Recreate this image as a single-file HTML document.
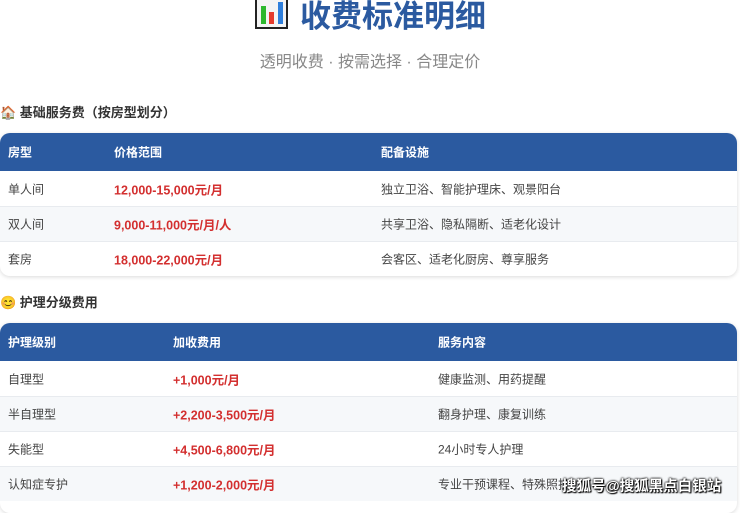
<!DOCTYPE html>
<html><head><meta charset="utf-8"><style>
body{margin:0;width:740px;height:499px;overflow:hidden;background:#fff;font-family:"Liberation Sans","Noto Sans CJK SC",sans-serif;position:relative}
.t{position:absolute;left:300px;top:-9px;font-size:31px;font-weight:bold;color:#2b5aa0;letter-spacing:0px;white-space:nowrap}
.ic{position:absolute;left:255px;top:-6px;width:33px;height:35px;border:2px solid #222;background:#f4f4f4;box-sizing:border-box}
.ic i{position:absolute;bottom:3px;width:5px}
.sub{position:absolute;left:0;width:740px;top:48px;text-align:center;font-size:16px;color:#888}
.h{position:absolute;left:0;font-size:13px;font-weight:bold;color:#333}
.tb{position:absolute;left:0;width:737px;border-radius:10px;overflow:hidden;box-shadow:0 1px 4px rgba(0,0,0,.15)}
.r{height:35px;position:relative;font-size:12px;color:#444;border-top:1px solid #e8ebef;box-sizing:border-box}
.r.hd{height:38px;background:#2b5aa0;color:#fff;font-weight:bold;border:0}
.r.g{background:#f6f8fa}
.r span{position:absolute;top:50%;transform:translateY(-50%);white-space:nowrap}
.p{color:#d32f2f;font-weight:bold;font-size:12.5px}
.wm{position:absolute;left:562px;top:475px;font-size:14.5px;color:#fff;font-weight:bold;text-shadow:0 0 2px #000,0 0 2px #000,1px 1px 1px #000;white-space:nowrap}
</style></head><body>
<div class="ic"><i style="left:4px;height:18px;background:#2db82d"></i><i style="left:12px;height:12px;background:#e53b2c"></i><i style="left:21px;height:22px;background:#2f7fdc"></i></div>
<div class="t">收费标准明细</div>
<div class="sub">透明收费 · 按需选择 · 合理定价</div>
<div class="h" style="top:102px">🏠 基础服务费（按房型划分）</div>
<div class="tb" style="top:133px">
<div class="r hd"><span style="left:8px">房型</span><span style="left:114px">价格范围</span><span style="left:381px">配备设施</span></div>
<div class="r" style="border:0"><span style="left:8px">单人间</span><span class="p" style="left:114px">12,000-15,000元/月</span><span style="left:381px">独立卫浴、智能护理床、观景阳台</span></div>
<div class="r g"><span style="left:8px">双人间</span><span class="p" style="left:114px">9,000-11,000元/月/人</span><span style="left:381px">共享卫浴、隐私隔断、适老化设计</span></div>
<div class="r"><span style="left:8px">套房</span><span class="p" style="left:114px">18,000-22,000元/月</span><span style="left:381px">会客区、适老化厨房、尊享服务</span></div>
</div>
<div class="h" style="top:292px">😊 护理分级费用</div>
<div class="tb" style="top:323px;height:190px">
<div class="r hd"><span style="left:8px">护理级别</span><span style="left:173px">加收费用</span><span style="left:438px">服务内容</span></div>
<div class="r" style="border:0"><span style="left:8px">自理型</span><span class="p" style="left:173px">+1,000元/月</span><span style="left:438px">健康监测、用药提醒</span></div>
<div class="r g"><span style="left:8px">半自理型</span><span class="p" style="left:173px">+2,200-3,500元/月</span><span style="left:438px">翻身护理、康复训练</span></div>
<div class="r"><span style="left:8px">失能型</span><span class="p" style="left:173px">+4,500-6,800元/月</span><span style="left:438px">24小时专人护理</span></div>
<div class="r g"><span style="left:8px">认知症专护</span><span class="p" style="left:173px">+1,200-2,000元/月</span><span style="left:438px">专业干预课程、特殊照护</span></div>
</div>
<div class="wm">搜狐号@搜狐黑点白银站</div>
</body></html>
